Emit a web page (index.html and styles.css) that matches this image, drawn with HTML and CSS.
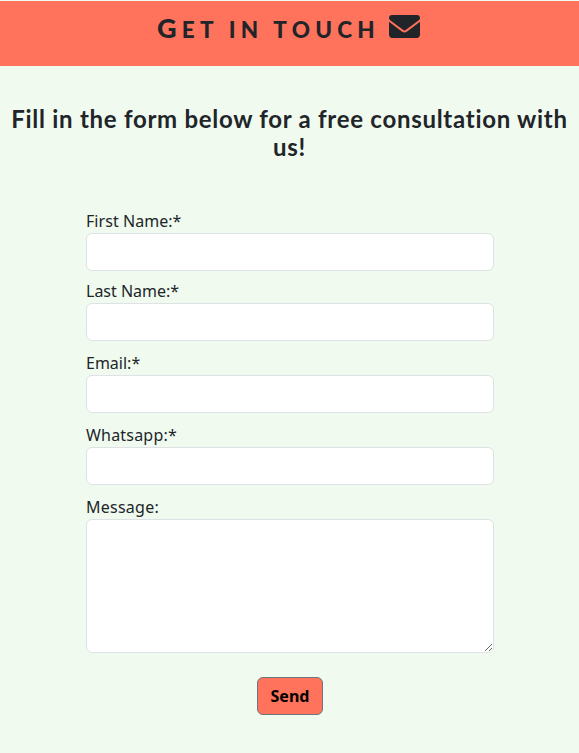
FILE: index.html
```html
<!DOCTYPE html>
<html lang="en">
<head>
<meta charset="utf-8">
<title>Get in touch</title>
<link rel="stylesheet" href="styles.css">
</head>
<body>
<header class="banner">
  <h1 class="banner-title"><span class="banner-text">Get in touch</span>
    <svg class="envelope" viewBox="0 64 512 384" aria-hidden="true"><path fill="currentColor" d="M48 64C21.500 64 0 85.500 0 112c0 15.100 7.100 29.300 19.200 38.400L236.800 313.600c11.400 8.500 27 8.500 38.400 0L492.800 150.400c12.100-9.100 19.200-23.300 19.200-38.400 0-26.500-21.500-48-48-48H48zM0 176V384c0 35.300 28.700 64 64 64H448c35.300 0 64-28.700 64-64V176L294.400 339.200c-22.800 17.100-54 17.100-76.800 0L0 176z"/></svg>
  </h1>
</header>
<main>
  <h2 class="intro"><span class="intro-first">Fill in the form below for a free consultation with</span> <span class="intro-last">us!</span></h2>
  <form class="contact">
    <div class="field field-first"><label for="first"><span class="t-first">First Name:*</span></label><input id="first" type="text"></div>
    <div class="field"><label for="last"><span class="t-last">Last Name:*</span></label><input id="last" type="text"></div>
    <div class="field"><label for="email"><span class="t-email">Email:*</span></label><input id="email" type="email"></div>
    <div class="field"><label for="whatsapp"><span class="t-whatsapp">Whatsapp:*</span></label><input id="whatsapp" type="tel"></div>
    <div class="field"><label for="message"><span class="t-message">Message:</span></label><textarea id="message"></textarea></div>
    <button class="send" type="button">Send</button>
  </form>
</main>
</body>
</html>
```
FILE: styles.css
```css
* { box-sizing: border-box; }
body {
  margin: 0;
  padding-top: 1px;
  min-height: 753px;
  background: #f0faef;
  color: #212529;
  font-family: "Noto Sans", sans-serif;
}
.banner { height: 65px; background: #ff725c; }
.banner-title {
  display: flex;
  justify-content: center;
  gap: 9px;
  margin: 0;
  padding: 10px 2px 0 0;
  font: 900 22.500px/34px Lato, sans-serif;
  letter-spacing: 5.250px;
}
.banner-text { display: block; white-space: nowrap; text-transform: uppercase; }
.banner-text::first-letter { font-size: 27px; line-height: 34px; }
.envelope { width: 31px; height: 23.250px; margin-top: 4px; }
.intro {
  margin: 39px 0 0;
  text-align: center;
  font: 700 24px/28px Lato, sans-serif;
  letter-spacing: .72px;
}
.intro-first, .intro-last { display: block; white-space: nowrap; }
.contact { width: 408px; margin: 47.600px auto 0 86px; }
.field { display: flex; flex-direction: column; margin-bottom: 10px; }
.field-first { margin-bottom: 8px; }
label { height: 24px; font-size: 16px; line-height: 24px; white-space: nowrap; }
.t-first { letter-spacing: .05px; }
.t-whatsapp { letter-spacing: .2px; }
.t-message { letter-spacing: .25px; }
input, textarea {
  width: 100%;
  height: 38px;
  margin: 0;
  padding: 6px 12px;
  border: 1px solid #dee2e6;
  border-radius: 6px;
  background: #fff;
  font: inherit;
}
textarea { height: 134px; resize: vertical; }
.send {
  display: block;
  width: 66px;
  height: 38px;
  margin: 24px auto 0;
  padding: 0;
  border: 1px solid #6c757d;
  border-radius: 6px;
  background: #ff725c;
  color: #000;
  font: 700 16px/24px "Noto Sans", sans-serif;
}
```
